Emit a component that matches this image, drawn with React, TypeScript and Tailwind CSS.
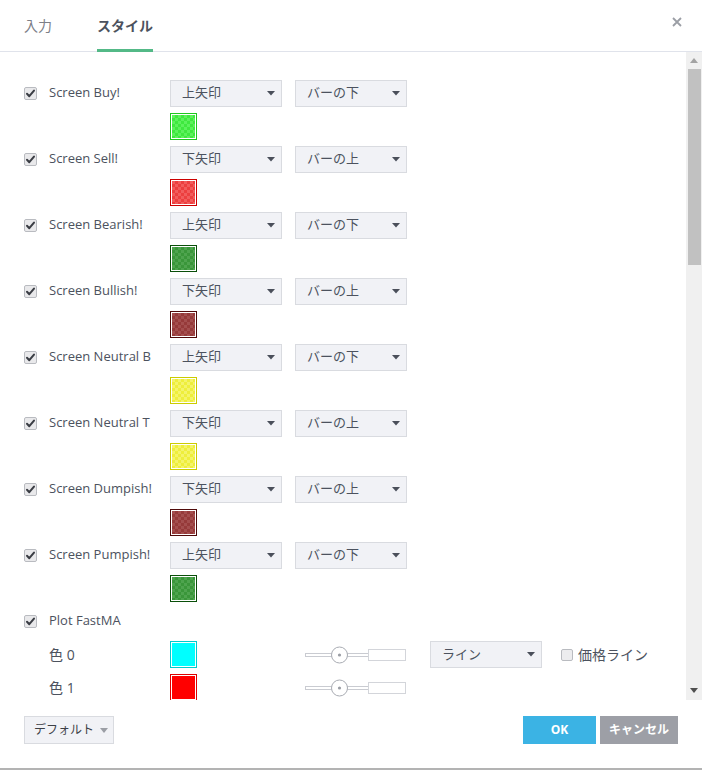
import React from "react";

const FONT = "font-['Open_Sans','Noto_Sans_CJK_JP',sans-serif]";

function Check({ checked = true }: { checked?: boolean }) {
  return (
    <svg width="13" height="13" viewBox="0 0 13 13" className="shrink-0">
      <rect x="0.5" y="0.5" width="12" height="12" rx="1.5" fill="#e9e9eb" stroke="#b9bbc0" />
      {checked && <path d="M3 6.8 L5.3 9.2 L10 3.6" fill="none" stroke="#3a3d44" strokeWidth="2" strokeLinecap="round" strokeLinejoin="round" />}
    </svg>
  );
}

function Caret() {
  return (
    <svg width="8" height="5" viewBox="0 0 8 5" className="shrink-0">
      <path d="M0 0 L8 0 L4 4.5 Z" fill="#4a4f5a" />
    </svg>
  );
}

function Select({ label }: { label: string }) {
  return (
    <div className="flex items-center justify-between w-[112px] h-[27px] bg-[#f1f2f6] border border-[#d9dbe0] pl-[11px] pr-[6px] text-[13px] text-[#4c525e]">
      <span>{label}</span>
      <Caret />
    </div>
  );
}

const swatchFill: Record<string, string> = {
  green: "bg-[repeating-conic-gradient(#3fe83f_0_25%,#5cf25c_0_50%)] bg-[length:6px_6px]",
  red: "bg-[repeating-conic-gradient(#ec3f3f_0_25%,#f25c5c_0_50%)] bg-[length:6px_6px]",
  dgreen: "bg-[repeating-conic-gradient(#3a963a_0_25%,#4ea44e_0_50%)] bg-[length:6px_6px]",
  dred: "bg-[repeating-conic-gradient(#963a3a_0_25%,#a44e4e_0_50%)] bg-[length:6px_6px]",
  yellow: "bg-[repeating-conic-gradient(#eeee3c_0_25%,#f4f46a_0_50%)] bg-[length:6px_6px]",
  cyan: "bg-[#00ffff]",
  solidred: "bg-[#ff0000]",
};
const swatchBorder: Record<string, string> = {
  green: "border-[#1ec81e]",
  red: "border-[#cc0000]",
  dgreen: "border-[#0a4f0a]",
  dred: "border-[#4f0a0a]",
  yellow: "border-[#cccc00]",
  cyan: "border-[#00cccc]",
  solidred: "border-[#dd0000]",
};

function Swatch({ c }: { c: string }) {
  return (
    <div className={`w-[27px] h-[27px] border ${swatchBorder[c]} p-px bg-white shrink-0`}>
      <div className={`w-full h-full ${swatchFill[c]}`} />
    </div>
  );
}

function Slider() {
  return (
    <svg width="102" height="20" viewBox="0 0 102 20" className="shrink-0">
      <rect x="0.5" y="8.5" width="33" height="3" fill="#fff" stroke="#c9cbd1" />
      <rect x="42" y="8.5" width="22" height="3" fill="#fff" stroke="#c9cbd1" />
      <rect x="63.5" y="4.5" width="37" height="11" fill="#fff" stroke="#d3d5da" />
      <circle cx="34.5" cy="10" r="8" fill="#fff" stroke="#a9acb3" />
      <circle cx="34.5" cy="10" r="1.6" fill="#9a9da4" />
    </svg>
  );
}

const rows = [
  { name: "Screen Buy!", a: "上矢印", b: "バーの下", c: "green" },
  { name: "Screen Sell!", a: "下矢印", b: "バーの上", c: "red" },
  { name: "Screen Bearish!", a: "上矢印", b: "バーの下", c: "dgreen" },
  { name: "Screen Bullish!", a: "下矢印", b: "バーの上", c: "dred" },
  { name: "Screen Neutral B", a: "上矢印", b: "バーの下", c: "yellow" },
  { name: "Screen Neutral T", a: "下矢印", b: "バーの上", c: "yellow" },
  { name: "Screen Dumpish!", a: "下矢印", b: "バーの上", c: "dred" },
  { name: "Screen Pumpish!", a: "上矢印", b: "バーの下", c: "dgreen" },
];

export default function App() {
  return (
    <div className={`${FONT} w-[702px] h-[770px] bg-white flex flex-col text-[#4c525e] overflow-hidden`}>
      {/* header */}
      <div className="h-[52px] shrink-0 border-b border-[#e0e3eb] flex items-stretch pl-[24px] pr-[20px]">
        <div className="flex items-center text-[14px] text-[#7d8088] mr-[45px]">入力</div>
        <div className="relative flex items-center text-[14px] font-semibold text-[#4c525e]">
          スタイル
          <div className="absolute left-0 right-0 bottom-[-1px] h-[3px] bg-[#53b987]" />
        </div>
        <div className="flex-1" />
        <div className="flex items-center pb-[8px]">
          <svg width="10" height="10" viewBox="0 0 10 10">
            <path d="M1 1 L9 9 M9 1 L1 9" stroke="#9b9ea5" strokeWidth="1.8" />
          </svg>
        </div>
      </div>

      {/* body */}
      <div className="h-[648px] shrink-0 flex">
        <div className="flex-1 overflow-hidden pl-[24px] pt-[28px]">
          {rows.map((r, i) => (
            <div key={i} className="mb-[6px]">
              <div className="flex items-center h-[26px]">
                <Check />
                <div className="ml-[12px] w-[121px] text-[13px]">{r.name}</div>
                <Select label={r.a} />
                <div className="w-[13px]" />
                <Select label={r.b} />
              </div>
              <div className="mt-[7px] ml-[146px]">
                <Swatch c={r.c} />
              </div>
            </div>
          ))}
          <div className="flex items-center h-[26px] mt-[5px]">
            <Check />
            <div className="ml-[12px] text-[13px]">Plot FastMA</div>
          </div>
          <div className="flex items-center h-[27px] mt-[7px]">
            <div className="ml-[25px] w-[121px] text-[14px]">色 0</div>
            <Swatch c="cyan" />
            <div className="w-[108px]" />
            <Slider />
            <div className="w-[23px]" />
            <Select label="ライン" />
            <div className="w-[19px]" />
            <svg width="12" height="12" viewBox="0 0 12 12" className="shrink-0">
              <rect x="0.5" y="0.5" width="11" height="11" rx="1.5" fill="#ececee" stroke="#b9bbc0" />
            </svg>
            <div className="ml-[5px] text-[14px]">価格ライン</div>
          </div>
          <div className="flex items-center h-[27px] mt-[6px]">
            <div className="ml-[25px] w-[121px] text-[14px]">色 1</div>
            <Swatch c="solidred" />
            <div className="w-[108px]" />
            <Slider />
          </div>
        </div>
        {/* scrollbar */}
        <div className="w-[16px] bg-[#f0f0f0] flex flex-col items-center pt-[6px] pb-[7px]">
          <svg width="8" height="5" viewBox="0 0 8 5">
            <path d="M0 5 L8 5 L4 0 Z" fill="#a3a3a3" />
          </svg>
          <div className="w-[13px] h-[196px] bg-[#c1c1c1] mt-[6px] ml-[1px]" />
          <div className="flex-1" />
          <svg width="8" height="5" viewBox="0 0 8 5">
            <path d="M0 0 L8 0 L4 5 Z" fill="#505050" />
          </svg>
        </div>
      </div>

      {/* footer */}
      <div className="flex-1 flex items-start pt-[16px] pl-[24px] pr-[24px] border-b-2 border-[#b3b3b3]">
        <div className="flex items-center h-[28px] w-[90px] bg-[#f1f2f6] border border-[#d9dbe0] pl-[9px] text-[12px] text-[#3c3f46] gap-[6px]">
          デフォルト
          <svg width="8" height="5" viewBox="0 0 8 5">
            <path d="M0 0 L8 0 L4 5 Z" fill="#9b9ea5" />
          </svg>
        </div>
        <div className="flex-1" />
        <div className="h-[28px] w-[73px] bg-[#3bb3e4] text-white text-[12px] font-bold flex items-center justify-center">OK</div>
        <div className="h-[28px] w-[78px] ml-[4px] bg-[#9d9fa6] text-white text-[12px] font-bold flex items-center justify-center">キャンセル</div>
      </div>
    </div>
  );
}
